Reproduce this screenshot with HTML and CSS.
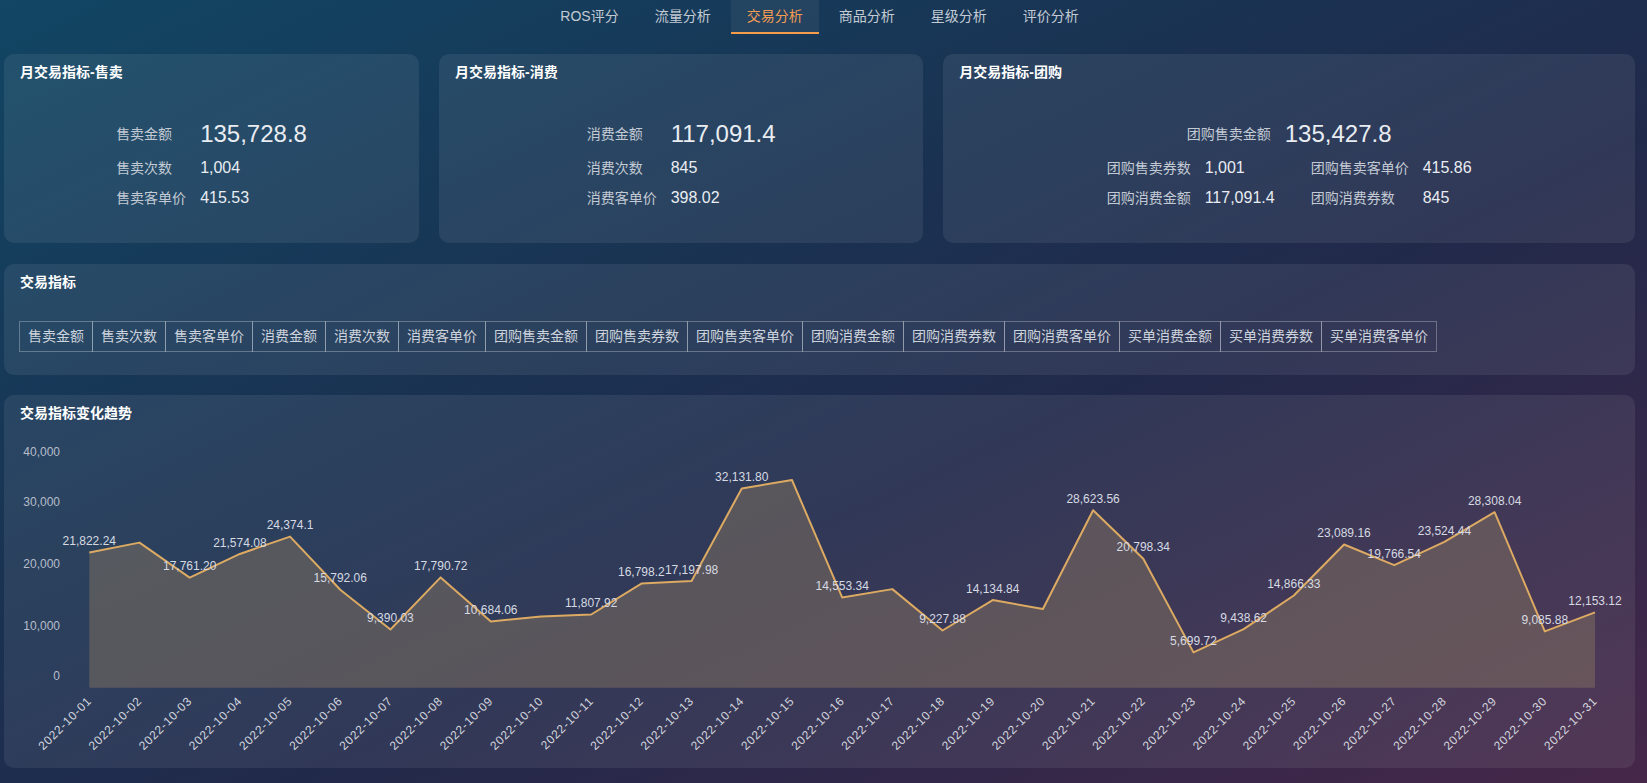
FILE: index.html
```html
<!DOCTYPE html>
<html lang="zh-CN">
<head>
<meta charset="utf-8">
<title>交易分析</title>
<link rel="stylesheet" href="styles.css">
</head>
<body>
<div class="page">
  <nav class="nav">
    <div class="tab">ROS评分</div>
    <div class="tab">流量分析</div>
    <div class="tab active">交易分析</div>
    <div class="tab">商品分析</div>
    <div class="tab">星级分析</div>
    <div class="tab">评价分析</div>
  </nav>

  <section class="row-top">
    <div class="card kpi">
      <div class="card-title">月交易指标-售卖</div>
      <div class="metrics">
        <div class="lbl first">售卖金额</div><div class="val big">135,728.8</div>
        <div class="lbl">售卖次数</div><div class="val">1,004</div>
        <div class="lbl">售卖客单价</div><div class="val">415.53</div>
      </div>
    </div>
    <div class="card kpi">
      <div class="card-title">月交易指标-消费</div>
      <div class="metrics">
        <div class="lbl first">消费金额</div><div class="val big">117,091.4</div>
        <div class="lbl">消费次数</div><div class="val">845</div>
        <div class="lbl">消费客单价</div><div class="val">398.02</div>
      </div>
    </div>
    <div class="card kpi">
      <div class="card-title">月交易指标-团购</div>
      <div class="group-top">
        <div class="lbl first">团购售卖金额</div><div class="val big">135,427.8</div>
      </div>
      <div class="grid4">
        <div class="lbl">团购售卖券数</div><div class="val">1,001</div>
        <div class="lbl c3">团购售卖客单价</div><div class="val">415.86</div>
        <div class="lbl">团购消费金额</div><div class="val">117,091.4</div>
        <div class="lbl c3">团购消费券数</div><div class="val">845</div>
      </div>
    </div>
  </section>

  <section class="card indicators">
    <div class="card-title">交易指标</div>
    <div class="btns">
      <span class="btn">售卖金额</span><span class="btn">售卖次数</span><span class="btn">售卖客单价</span><span class="btn">消费金额</span><span class="btn">消费次数</span><span class="btn">消费客单价</span><span class="btn">团购售卖金额</span><span class="btn">团购售卖券数</span><span class="btn">团购售卖客单价</span><span class="btn">团购消费金额</span><span class="btn">团购消费券数</span><span class="btn">团购消费客单价</span><span class="btn">买单消费金额</span><span class="btn">买单消费券数</span><span class="btn">买单消费客单价</span>
    </div>
  </section>

  <section class="card chart">
    <div class="card-title">交易指标变化趋势</div>
    <svg class="plot" width="1631" height="345" viewBox="0 0 1631 345">
      <g class="yaxis">
        <text x="56" y="33">40,000</text>
        <text x="56" y="83">30,000</text>
        <text x="56" y="145.3">20,000</text>
        <text x="56" y="207.3">10,000</text>
        <text x="56" y="257.3">0</text>
      </g>
      <polygon class="area" points="85.3,264.7 85.3,129.4 135.49,119.62 185.68,154.58 235.87,130.94 286.06,113.58 336.25,166.79 386.44,206.48 436.63,154.4 486.82,198.46 537.01,193.4 587.2,191.49 637.39,160.55 687.58,158.07 737.77,65.48 787.96,57 838.15,174.47 888.34,166.12 938.53,207.49 988.72,177.06 1038.91,185.96 1089.1,87.23 1139.29,135.75 1189.48,229.36 1239.67,206.18 1289.86,172.53 1340.05,121.55 1390.24,142.15 1440.43,118.85 1490.62,89.19 1540.81,208.37 1591,189.35 1591,264.7"/>
      <polyline class="line" points="85.3,129.4 135.49,119.62 185.68,154.58 235.87,130.94 286.06,113.58 336.25,166.79 386.44,206.48 436.63,154.4 486.82,198.46 537.01,193.4 587.2,191.49 637.39,160.55 687.58,158.07 737.77,65.48 787.96,57 838.15,174.47 888.34,166.12 938.53,207.49 988.72,177.06 1038.91,185.96 1089.1,87.23 1139.29,135.75 1189.48,229.36 1239.67,206.18 1289.86,172.53 1340.05,121.55 1390.24,142.15 1440.43,118.85 1490.62,89.19 1540.81,208.37 1591,189.35"/>
      <g class="vlabels">
        <text x="85.3" y="122">21,822.24</text>
        <text x="185.68" y="147.2">17,761.20</text>
        <text x="235.87" y="123.5">21,574.08</text>
        <text x="286.06" y="106.2">24,374.1</text>
        <text x="336.25" y="159.4">15,792.06</text>
        <text x="386.44" y="199.1">9,390.03</text>
        <text x="436.63" y="147">17,790.72</text>
        <text x="486.82" y="191.1">10,684.06</text>
        <text x="587.2" y="184.1">11,807.92</text>
        <text x="637.39" y="153.2">16,798.2</text>
        <text x="687.58" y="150.7">17,197.98</text>
        <text x="737.77" y="58.1">32,131.80</text>
        <text x="838.15" y="167.1">14,553.34</text>
        <text x="938.53" y="200.1">9,227.88</text>
        <text x="988.72" y="169.7">14,134.84</text>
        <text x="1089.1" y="79.8">28,623.56</text>
        <text x="1139.29" y="128.4">20,798.34</text>
        <text x="1189.48" y="222">5,699.72</text>
        <text x="1239.67" y="198.8">9,438.62</text>
        <text x="1289.86" y="165.1">14,866.33</text>
        <text x="1340.05" y="114.2">23,089.16</text>
        <text x="1390.24" y="134.8">19,766.54</text>
        <text x="1440.43" y="111.5">23,524.44</text>
        <text x="1490.62" y="81.8">28,308.04</text>
        <text x="1540.81" y="201">9,085.88</text>
        <text x="1591" y="182">12,153.12</text>
      </g>
      <g class="xaxis">
        <text transform="translate(88.3 278.7) rotate(-45)">2022-10-01</text>
        <text transform="translate(138.5 278.7) rotate(-45)">2022-10-02</text>
        <text transform="translate(188.7 278.7) rotate(-45)">2022-10-03</text>
        <text transform="translate(238.9 278.7) rotate(-45)">2022-10-04</text>
        <text transform="translate(289.1 278.7) rotate(-45)">2022-10-05</text>
        <text transform="translate(339.3 278.7) rotate(-45)">2022-10-06</text>
        <text transform="translate(389.4 278.7) rotate(-45)">2022-10-07</text>
        <text transform="translate(439.6 278.7) rotate(-45)">2022-10-08</text>
        <text transform="translate(489.8 278.7) rotate(-45)">2022-10-09</text>
        <text transform="translate(540 278.7) rotate(-45)">2022-10-10</text>
        <text transform="translate(590.2 278.7) rotate(-45)">2022-10-11</text>
        <text transform="translate(640.4 278.7) rotate(-45)">2022-10-12</text>
        <text transform="translate(690.6 278.7) rotate(-45)">2022-10-13</text>
        <text transform="translate(740.8 278.7) rotate(-45)">2022-10-14</text>
        <text transform="translate(791 278.7) rotate(-45)">2022-10-15</text>
        <text transform="translate(841.2 278.7) rotate(-45)">2022-10-16</text>
        <text transform="translate(891.3 278.7) rotate(-45)">2022-10-17</text>
        <text transform="translate(941.5 278.7) rotate(-45)">2022-10-18</text>
        <text transform="translate(991.7 278.7) rotate(-45)">2022-10-19</text>
        <text transform="translate(1041.9 278.7) rotate(-45)">2022-10-20</text>
        <text transform="translate(1092.1 278.7) rotate(-45)">2022-10-21</text>
        <text transform="translate(1142.3 278.7) rotate(-45)">2022-10-22</text>
        <text transform="translate(1192.5 278.7) rotate(-45)">2022-10-23</text>
        <text transform="translate(1242.7 278.7) rotate(-45)">2022-10-24</text>
        <text transform="translate(1292.9 278.7) rotate(-45)">2022-10-25</text>
        <text transform="translate(1343.1 278.7) rotate(-45)">2022-10-26</text>
        <text transform="translate(1393.2 278.7) rotate(-45)">2022-10-27</text>
        <text transform="translate(1443.4 278.7) rotate(-45)">2022-10-28</text>
        <text transform="translate(1493.6 278.7) rotate(-45)">2022-10-29</text>
        <text transform="translate(1543.8 278.7) rotate(-45)">2022-10-30</text>
        <text transform="translate(1594 278.7) rotate(-45)">2022-10-31</text>
      </g>
    </svg>
  </section>
</div>
</body>
</html>
```

FILE: styles.css
```css
* { box-sizing: border-box; }

html, body {
  margin: 0;
  height: 100%;
}

body {
  font-family: "Liberation Sans", "Noto Sans CJK SC", sans-serif;
  background: linear-gradient(to bottom right, #114664 0%, #1a3252 38%, #22294a 60%, #462749 100%);
  color: #e6eaf0;
  overflow: hidden;
}

.page {
  padding: 0 12px 0 4px;
}

/* top tabs */
.nav {
  display: flex;
  justify-content: center;
  gap: 4px;
  height: 34px;
}

.tab {
  padding: 0 16px;
  line-height: 32px;
  font-size: 14px;
  color: #c3cbd4;
  border-bottom: 2px solid transparent;
}

.tab.active {
  color: #f49d52;
  border-bottom-color: #f59b4c;
  background: rgba(255, 255, 255, 0.06);
}

/* cards */
.card {
  background: rgba(255, 255, 255, 0.075);
  border-radius: 10px;
}

.card-title {
  padding: 8px 16px 0;
  font-size: 14px;
  font-weight: bold;
  line-height: 20px;
  color: #ffffff;
}

.row-top {
  display: grid;
  grid-template-columns: 6fr 7fr 10fr;
  gap: 20px;
  margin-top: 20px;
}

.kpi {
  height: 189px;
  display: flex;
  flex-direction: column;
}

.metrics {
  margin-top: 35px;
  display: grid;
  grid-template-columns: auto auto;
  column-gap: 14px;
  row-gap: 4px;
  justify-content: center;
  align-items: center;
}

.lbl {
  font-size: 14px;
  line-height: 26px;
  color: #c3cad4;
  white-space: nowrap;
}

.lbl.first {
  line-height: 34px;
}

.val {
  font-size: 16px;
  line-height: 26px;
  color: #e9edf2;
  white-space: nowrap;
}

.val.big {
  font-size: 24px;
  line-height: 34px;
}

.group-top {
  margin-top: 35px;
  display: flex;
  justify-content: center;
  align-items: center;
  gap: 14px;
}

.grid4 {
  margin-top: 4px;
  display: grid;
  grid-template-columns: repeat(4, auto);
  column-gap: 14px;
  row-gap: 4px;
  justify-content: center;
  align-items: center;
}

.grid4 .c3 {
  margin-left: 22px;
}

/* indicator buttons */
.indicators {
  margin-top: 21px;
  height: 111px;
}

.btns {
  display: flex;
  margin: 29px 0 0 15px;
}

.btn {
  font-size: 14px;
  line-height: 29px;
  padding: 0 8px;
  color: #cdd3dc;
  border: 1px solid rgba(255, 255, 255, 0.28);
  white-space: nowrap;
}

.btn + .btn {
  margin-left: -1px;
}

/* chart */
.chart {
  margin-top: 20px;
  height: 373px;
  overflow: hidden;
}

.plot {
  display: block;
  font-family: "Liberation Sans", sans-serif;
  font-size: 12px;
}

.yaxis text {
  fill: #b6bdca;
  text-anchor: end;
}

.area {
  fill: rgba(130, 114, 95, 0.5);
}

.line {
  fill: none;
  stroke: #dcaa62;
  stroke-width: 2;
  stroke-linejoin: round;
}

.vlabels text {
  fill: #d6dae2;
  text-anchor: middle;
}

.xaxis text {
  fill: #d2d6de;
  text-anchor: end;
  letter-spacing: 0.8px;
}
```
